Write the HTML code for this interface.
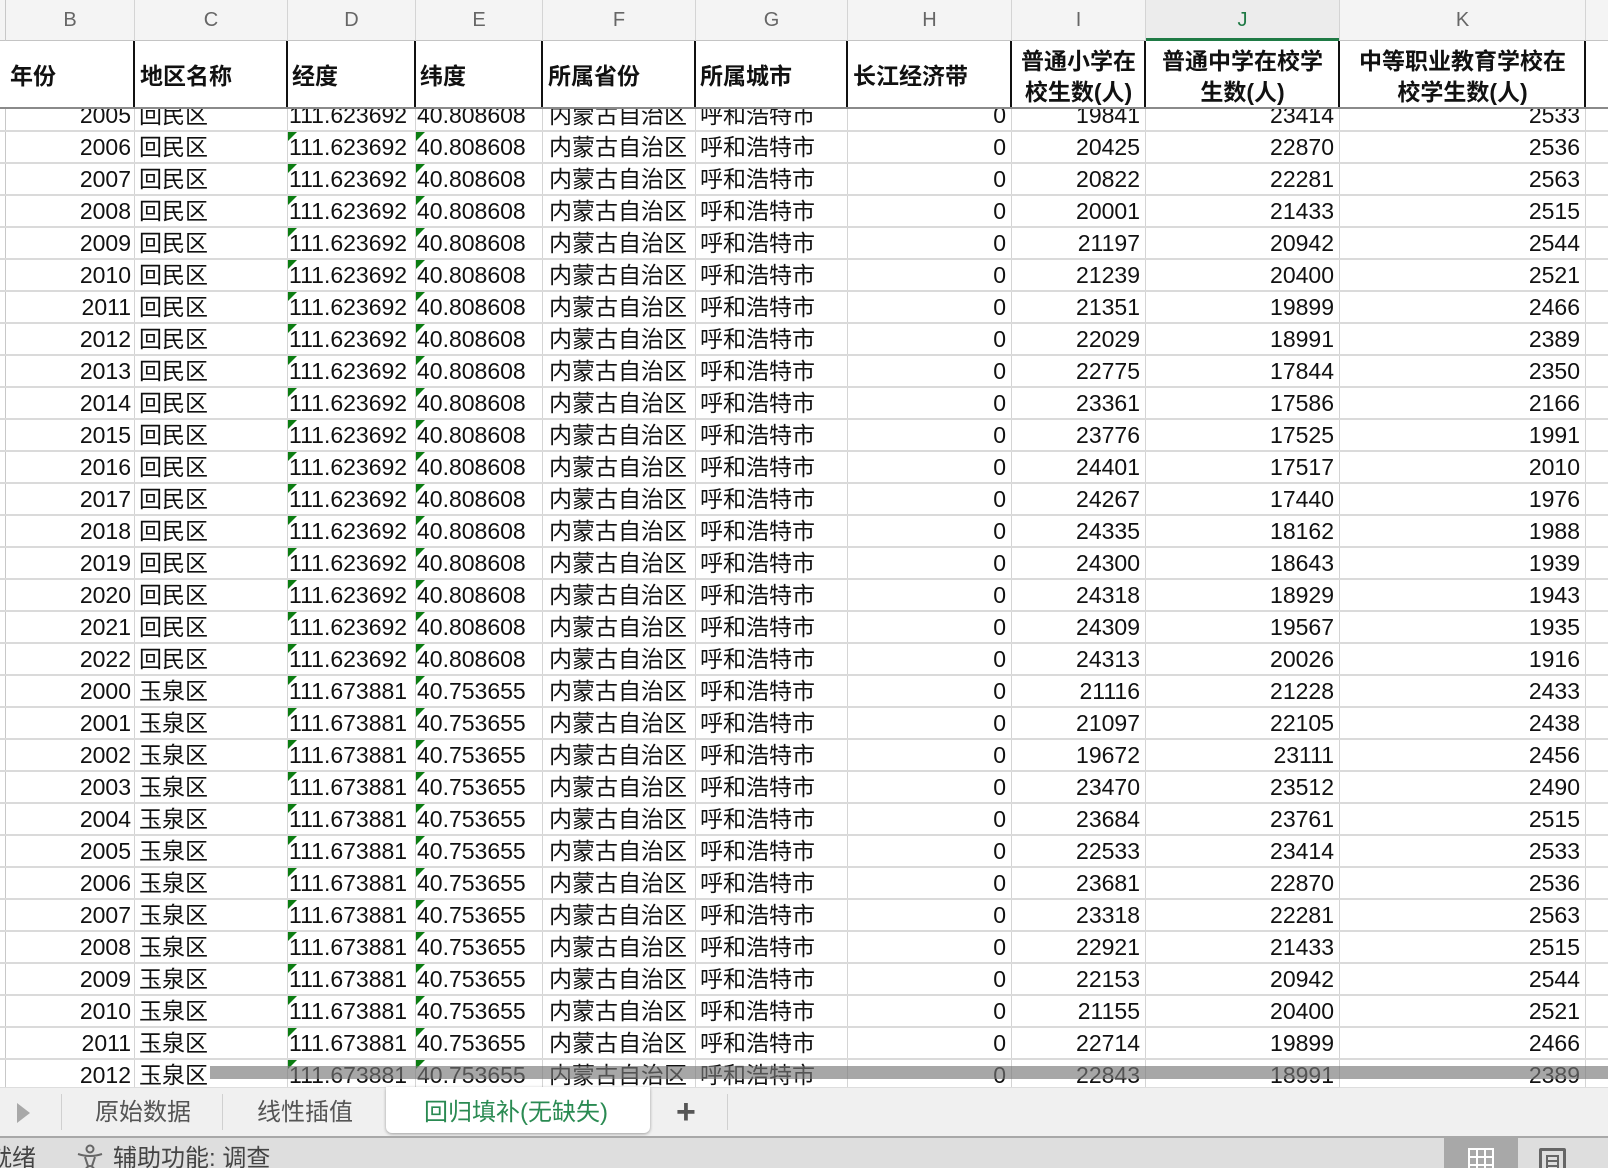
<!DOCTYPE html>
<html><head><meta charset="utf-8">
<style>
*{margin:0;padding:0;box-sizing:border-box}
body{width:1608px;height:1168px;overflow:hidden;background:#fff;position:relative;font-family:"Liberation Sans","Noto Sans CJK SC",sans-serif;color:#111}
.abs{position:absolute}
.colhdr{top:0;height:41px;background:#f4f4f4;border-bottom:1px solid #c4c4c4;color:#666;font-size:20px;line-height:40px;text-align:center}
.vl{position:absolute;width:1px;background:#d4d4d4;top:0;height:1088px}
.hl{position:absolute;left:0;width:1608px;height:2px;background:#dadada}
.row{position:absolute;left:0;width:1608px;height:32px;font-size:23px;line-height:32px;white-space:nowrap}
.row span{position:absolute;top:0}
.b{right:1477px}
.c{left:139px}
.d{left:289px}
.e{left:417px}
.f{left:549px}
.g{left:700px}
.h{right:602px}
.i{right:468px}
.j{right:274px}
.k{right:28px}
.tri{position:absolute;width:0;height:0;border-top:9px solid #0b7d12;border-right:9px solid transparent}
.hdr{position:absolute;top:41px;height:68px;left:0;width:1608px;background:#fff;border-bottom:2px solid #8a8a8a;font-weight:bold;font-size:23px;z-index:5}
.hdr span{position:absolute;top:2px;line-height:66px}
.hdr .two{line-height:31px;text-align:center;top:5px}
.bv{position:absolute;top:0;height:66px;width:2px;background:#111}
.wrap{position:absolute;left:0;top:3px;width:1608px;height:1085px;overflow:hidden}
</style></head><body>

<!-- column letters -->
<div class="abs colhdr" style="left:0;width:1608px"></div>
<div class="abs colhdr" style="left:5px;width:129px;border-left:1px solid #c4c4c4">B</div>
<div class="abs colhdr" style="left:134px;width:153px;border-left:1px solid #d8d8d8">C</div>
<div class="abs colhdr" style="left:287px;width:128px;border-left:1px solid #d8d8d8">D</div>
<div class="abs colhdr" style="left:415px;width:127px;border-left:1px solid #d8d8d8">E</div>
<div class="abs colhdr" style="left:542px;width:153px;border-left:1px solid #d8d8d8">F</div>
<div class="abs colhdr" style="left:695px;width:152px;border-left:1px solid #d8d8d8">G</div>
<div class="abs colhdr" style="left:847px;width:164px;border-left:1px solid #d8d8d8">H</div>
<div class="abs colhdr" style="left:1011px;width:134px;border-left:1px solid #d8d8d8">I</div>
<div class="abs colhdr" style="left:1145px;width:194px;border-left:1px solid #d8d8d8;background:#ececec;color:#1f7a45;border-bottom:3px solid #1f7a45">J</div>
<div class="abs colhdr" style="left:1339px;width:246px;border-left:1px solid #d8d8d8">K</div>
<div class="abs colhdr" style="left:1585px;width:23px;border-left:1px solid #d8d8d8"></div>

<!-- grid lines -->
<div class="vl" style="left:5px;background:#c8c8c8"></div>
<div class="vl" style="left:134px"></div>
<div class="vl" style="left:287px"></div>
<div class="vl" style="left:415px"></div>
<div class="vl" style="left:542px"></div>
<div class="vl" style="left:695px"></div>
<div class="vl" style="left:847px"></div>
<div class="vl" style="left:1011px"></div>
<div class="vl" style="left:1145px"></div>
<div class="vl" style="left:1339px"></div>
<div class="vl" style="left:1585px"></div>

<div class="wrap">
<div class="hl" style="top:127px"></div><div class="hl" style="top:159px"></div><div class="hl" style="top:191px"></div><div class="hl" style="top:223px"></div><div class="hl" style="top:255px"></div><div class="hl" style="top:287px"></div><div class="hl" style="top:319px"></div><div class="hl" style="top:351px"></div><div class="hl" style="top:383px"></div><div class="hl" style="top:415px"></div><div class="hl" style="top:447px"></div><div class="hl" style="top:479px"></div><div class="hl" style="top:511px"></div><div class="hl" style="top:543px"></div><div class="hl" style="top:575px"></div><div class="hl" style="top:607px"></div><div class="hl" style="top:639px"></div><div class="hl" style="top:671px"></div><div class="hl" style="top:703px"></div><div class="hl" style="top:735px"></div><div class="hl" style="top:767px"></div><div class="hl" style="top:799px"></div><div class="hl" style="top:831px"></div><div class="hl" style="top:863px"></div><div class="hl" style="top:895px"></div><div class="hl" style="top:927px"></div><div class="hl" style="top:959px"></div><div class="hl" style="top:991px"></div><div class="hl" style="top:1023px"></div><div class="hl" style="top:1055px"></div>

<div class="tri" style="left:288px;top:129px"></div><div class="tri" style="left:416px;top:129px"></div>
<div class="tri" style="left:288px;top:161px"></div><div class="tri" style="left:416px;top:161px"></div>
<div class="tri" style="left:288px;top:193px"></div><div class="tri" style="left:416px;top:193px"></div>
<div class="tri" style="left:288px;top:225px"></div><div class="tri" style="left:416px;top:225px"></div>
<div class="tri" style="left:288px;top:257px"></div><div class="tri" style="left:416px;top:257px"></div>
<div class="tri" style="left:288px;top:289px"></div><div class="tri" style="left:416px;top:289px"></div>
<div class="tri" style="left:288px;top:321px"></div><div class="tri" style="left:416px;top:321px"></div>
<div class="tri" style="left:288px;top:353px"></div><div class="tri" style="left:416px;top:353px"></div>
<div class="tri" style="left:288px;top:385px"></div><div class="tri" style="left:416px;top:385px"></div>
<div class="tri" style="left:288px;top:417px"></div><div class="tri" style="left:416px;top:417px"></div>
<div class="tri" style="left:288px;top:449px"></div><div class="tri" style="left:416px;top:449px"></div>
<div class="tri" style="left:288px;top:481px"></div><div class="tri" style="left:416px;top:481px"></div>
<div class="tri" style="left:288px;top:513px"></div><div class="tri" style="left:416px;top:513px"></div>
<div class="tri" style="left:288px;top:545px"></div><div class="tri" style="left:416px;top:545px"></div>
<div class="tri" style="left:288px;top:577px"></div><div class="tri" style="left:416px;top:577px"></div>
<div class="tri" style="left:288px;top:609px"></div><div class="tri" style="left:416px;top:609px"></div>
<div class="tri" style="left:288px;top:641px"></div><div class="tri" style="left:416px;top:641px"></div>
<div class="tri" style="left:288px;top:673px"></div><div class="tri" style="left:416px;top:673px"></div>
<div class="tri" style="left:288px;top:705px"></div><div class="tri" style="left:416px;top:705px"></div>
<div class="tri" style="left:288px;top:737px"></div><div class="tri" style="left:416px;top:737px"></div>
<div class="tri" style="left:288px;top:769px"></div><div class="tri" style="left:416px;top:769px"></div>
<div class="tri" style="left:288px;top:801px"></div><div class="tri" style="left:416px;top:801px"></div>
<div class="tri" style="left:288px;top:833px"></div><div class="tri" style="left:416px;top:833px"></div>
<div class="tri" style="left:288px;top:865px"></div><div class="tri" style="left:416px;top:865px"></div>
<div class="tri" style="left:288px;top:897px"></div><div class="tri" style="left:416px;top:897px"></div>
<div class="tri" style="left:288px;top:929px"></div><div class="tri" style="left:416px;top:929px"></div>
<div class="tri" style="left:288px;top:961px"></div><div class="tri" style="left:416px;top:961px"></div>
<div class="tri" style="left:288px;top:993px"></div><div class="tri" style="left:416px;top:993px"></div>
<div class="tri" style="left:288px;top:1025px"></div><div class="tri" style="left:416px;top:1025px"></div>
<div class="tri" style="left:288px;top:1057px"></div><div class="tri" style="left:416px;top:1057px"></div>

<div class="row" style="top:96px"><span class="b">2005</span><span class="c">回民区</span><span class="d">111.623692</span><span class="e">40.808608</span><span class="f">内蒙古自治区</span><span class="g">呼和浩特市</span><span class="h">0</span><span class="i">19841</span><span class="j">23414</span><span class="k">2533</span></div>
<div class="row" style="top:128px"><span class="b">2006</span><span class="c">回民区</span><span class="d">111.623692</span><span class="e">40.808608</span><span class="f">内蒙古自治区</span><span class="g">呼和浩特市</span><span class="h">0</span><span class="i">20425</span><span class="j">22870</span><span class="k">2536</span></div>
<div class="row" style="top:160px"><span class="b">2007</span><span class="c">回民区</span><span class="d">111.623692</span><span class="e">40.808608</span><span class="f">内蒙古自治区</span><span class="g">呼和浩特市</span><span class="h">0</span><span class="i">20822</span><span class="j">22281</span><span class="k">2563</span></div>
<div class="row" style="top:192px"><span class="b">2008</span><span class="c">回民区</span><span class="d">111.623692</span><span class="e">40.808608</span><span class="f">内蒙古自治区</span><span class="g">呼和浩特市</span><span class="h">0</span><span class="i">20001</span><span class="j">21433</span><span class="k">2515</span></div>
<div class="row" style="top:224px"><span class="b">2009</span><span class="c">回民区</span><span class="d">111.623692</span><span class="e">40.808608</span><span class="f">内蒙古自治区</span><span class="g">呼和浩特市</span><span class="h">0</span><span class="i">21197</span><span class="j">20942</span><span class="k">2544</span></div>
<div class="row" style="top:256px"><span class="b">2010</span><span class="c">回民区</span><span class="d">111.623692</span><span class="e">40.808608</span><span class="f">内蒙古自治区</span><span class="g">呼和浩特市</span><span class="h">0</span><span class="i">21239</span><span class="j">20400</span><span class="k">2521</span></div>
<div class="row" style="top:288px"><span class="b">2011</span><span class="c">回民区</span><span class="d">111.623692</span><span class="e">40.808608</span><span class="f">内蒙古自治区</span><span class="g">呼和浩特市</span><span class="h">0</span><span class="i">21351</span><span class="j">19899</span><span class="k">2466</span></div>
<div class="row" style="top:320px"><span class="b">2012</span><span class="c">回民区</span><span class="d">111.623692</span><span class="e">40.808608</span><span class="f">内蒙古自治区</span><span class="g">呼和浩特市</span><span class="h">0</span><span class="i">22029</span><span class="j">18991</span><span class="k">2389</span></div>
<div class="row" style="top:352px"><span class="b">2013</span><span class="c">回民区</span><span class="d">111.623692</span><span class="e">40.808608</span><span class="f">内蒙古自治区</span><span class="g">呼和浩特市</span><span class="h">0</span><span class="i">22775</span><span class="j">17844</span><span class="k">2350</span></div>
<div class="row" style="top:384px"><span class="b">2014</span><span class="c">回民区</span><span class="d">111.623692</span><span class="e">40.808608</span><span class="f">内蒙古自治区</span><span class="g">呼和浩特市</span><span class="h">0</span><span class="i">23361</span><span class="j">17586</span><span class="k">2166</span></div>
<div class="row" style="top:416px"><span class="b">2015</span><span class="c">回民区</span><span class="d">111.623692</span><span class="e">40.808608</span><span class="f">内蒙古自治区</span><span class="g">呼和浩特市</span><span class="h">0</span><span class="i">23776</span><span class="j">17525</span><span class="k">1991</span></div>
<div class="row" style="top:448px"><span class="b">2016</span><span class="c">回民区</span><span class="d">111.623692</span><span class="e">40.808608</span><span class="f">内蒙古自治区</span><span class="g">呼和浩特市</span><span class="h">0</span><span class="i">24401</span><span class="j">17517</span><span class="k">2010</span></div>
<div class="row" style="top:480px"><span class="b">2017</span><span class="c">回民区</span><span class="d">111.623692</span><span class="e">40.808608</span><span class="f">内蒙古自治区</span><span class="g">呼和浩特市</span><span class="h">0</span><span class="i">24267</span><span class="j">17440</span><span class="k">1976</span></div>
<div class="row" style="top:512px"><span class="b">2018</span><span class="c">回民区</span><span class="d">111.623692</span><span class="e">40.808608</span><span class="f">内蒙古自治区</span><span class="g">呼和浩特市</span><span class="h">0</span><span class="i">24335</span><span class="j">18162</span><span class="k">1988</span></div>
<div class="row" style="top:544px"><span class="b">2019</span><span class="c">回民区</span><span class="d">111.623692</span><span class="e">40.808608</span><span class="f">内蒙古自治区</span><span class="g">呼和浩特市</span><span class="h">0</span><span class="i">24300</span><span class="j">18643</span><span class="k">1939</span></div>
<div class="row" style="top:576px"><span class="b">2020</span><span class="c">回民区</span><span class="d">111.623692</span><span class="e">40.808608</span><span class="f">内蒙古自治区</span><span class="g">呼和浩特市</span><span class="h">0</span><span class="i">24318</span><span class="j">18929</span><span class="k">1943</span></div>
<div class="row" style="top:608px"><span class="b">2021</span><span class="c">回民区</span><span class="d">111.623692</span><span class="e">40.808608</span><span class="f">内蒙古自治区</span><span class="g">呼和浩特市</span><span class="h">0</span><span class="i">24309</span><span class="j">19567</span><span class="k">1935</span></div>
<div class="row" style="top:640px"><span class="b">2022</span><span class="c">回民区</span><span class="d">111.623692</span><span class="e">40.808608</span><span class="f">内蒙古自治区</span><span class="g">呼和浩特市</span><span class="h">0</span><span class="i">24313</span><span class="j">20026</span><span class="k">1916</span></div>
<div class="row" style="top:672px"><span class="b">2000</span><span class="c">玉泉区</span><span class="d">111.673881</span><span class="e">40.753655</span><span class="f">内蒙古自治区</span><span class="g">呼和浩特市</span><span class="h">0</span><span class="i">21116</span><span class="j">21228</span><span class="k">2433</span></div>
<div class="row" style="top:704px"><span class="b">2001</span><span class="c">玉泉区</span><span class="d">111.673881</span><span class="e">40.753655</span><span class="f">内蒙古自治区</span><span class="g">呼和浩特市</span><span class="h">0</span><span class="i">21097</span><span class="j">22105</span><span class="k">2438</span></div>
<div class="row" style="top:736px"><span class="b">2002</span><span class="c">玉泉区</span><span class="d">111.673881</span><span class="e">40.753655</span><span class="f">内蒙古自治区</span><span class="g">呼和浩特市</span><span class="h">0</span><span class="i">19672</span><span class="j">23111</span><span class="k">2456</span></div>
<div class="row" style="top:768px"><span class="b">2003</span><span class="c">玉泉区</span><span class="d">111.673881</span><span class="e">40.753655</span><span class="f">内蒙古自治区</span><span class="g">呼和浩特市</span><span class="h">0</span><span class="i">23470</span><span class="j">23512</span><span class="k">2490</span></div>
<div class="row" style="top:800px"><span class="b">2004</span><span class="c">玉泉区</span><span class="d">111.673881</span><span class="e">40.753655</span><span class="f">内蒙古自治区</span><span class="g">呼和浩特市</span><span class="h">0</span><span class="i">23684</span><span class="j">23761</span><span class="k">2515</span></div>
<div class="row" style="top:832px"><span class="b">2005</span><span class="c">玉泉区</span><span class="d">111.673881</span><span class="e">40.753655</span><span class="f">内蒙古自治区</span><span class="g">呼和浩特市</span><span class="h">0</span><span class="i">22533</span><span class="j">23414</span><span class="k">2533</span></div>
<div class="row" style="top:864px"><span class="b">2006</span><span class="c">玉泉区</span><span class="d">111.673881</span><span class="e">40.753655</span><span class="f">内蒙古自治区</span><span class="g">呼和浩特市</span><span class="h">0</span><span class="i">23681</span><span class="j">22870</span><span class="k">2536</span></div>
<div class="row" style="top:896px"><span class="b">2007</span><span class="c">玉泉区</span><span class="d">111.673881</span><span class="e">40.753655</span><span class="f">内蒙古自治区</span><span class="g">呼和浩特市</span><span class="h">0</span><span class="i">23318</span><span class="j">22281</span><span class="k">2563</span></div>
<div class="row" style="top:928px"><span class="b">2008</span><span class="c">玉泉区</span><span class="d">111.673881</span><span class="e">40.753655</span><span class="f">内蒙古自治区</span><span class="g">呼和浩特市</span><span class="h">0</span><span class="i">22921</span><span class="j">21433</span><span class="k">2515</span></div>
<div class="row" style="top:960px"><span class="b">2009</span><span class="c">玉泉区</span><span class="d">111.673881</span><span class="e">40.753655</span><span class="f">内蒙古自治区</span><span class="g">呼和浩特市</span><span class="h">0</span><span class="i">22153</span><span class="j">20942</span><span class="k">2544</span></div>
<div class="row" style="top:992px"><span class="b">2010</span><span class="c">玉泉区</span><span class="d">111.673881</span><span class="e">40.753655</span><span class="f">内蒙古自治区</span><span class="g">呼和浩特市</span><span class="h">0</span><span class="i">21155</span><span class="j">20400</span><span class="k">2521</span></div>
<div class="row" style="top:1024px"><span class="b">2011</span><span class="c">玉泉区</span><span class="d">111.673881</span><span class="e">40.753655</span><span class="f">内蒙古自治区</span><span class="g">呼和浩特市</span><span class="h">0</span><span class="i">22714</span><span class="j">19899</span><span class="k">2466</span></div>
<div class="row" style="top:1056px"><span class="b">2012</span><span class="c">玉泉区</span><span class="d">111.673881</span><span class="e">40.753655</span><span class="f">内蒙古自治区</span><span class="g">呼和浩特市</span><span class="h">0</span><span class="i">22843</span><span class="j">18991</span><span class="k">2389</span></div>
</div>

<!-- scrollbar overlay -->
<div class="abs" style="left:210px;top:1066px;width:1398px;height:13px;background:rgba(120,120,120,0.65);z-index:4"></div>

<!-- frozen header -->
<div class="hdr">
<div class="bv" style="left:133px"></div><div class="bv" style="left:286px"></div><div class="bv" style="left:414px"></div><div class="bv" style="left:541px"></div><div class="bv" style="left:694px"></div><div class="bv" style="left:846px"></div><div class="bv" style="left:1010px"></div><div class="bv" style="left:1144px"></div><div class="bv" style="left:1338px"></div><div class="bv" style="left:1584px"></div>
<span style="left:10px">年份</span>
<span style="left:140px">地区名称</span>
<span style="left:292px">经度</span>
<span style="left:420px">纬度</span>
<span style="left:548px">所属省份</span>
<span style="left:700px">所属城市</span>
<span style="left:853px">长江经济带</span>
<span class="two" style="left:1012px;width:133px">普通小学在<br>校生数(人)</span>
<span class="two" style="left:1146px;width:193px">普通中学在校学<br>生数(人)</span>
<span class="two" style="left:1340px;width:245px">中等职业教育学校在<br>校学生数(人)</span>
</div>

<!-- tab bar -->
<div class="abs" style="left:0;top:1087px;width:1608px;height:51px;background:#f0f0f0;z-index:6;border-top:1px solid #ddd">
  <div class="abs" style="left:17px;top:15px;width:0;height:0;border-left:13px solid #a8a8a8;border-top:10px solid transparent;border-bottom:10px solid transparent"></div>
  <div class="abs" style="left:61px;top:6px;width:1px;height:36px;background:#d0d0d0"></div>
  <div class="abs" style="left:95px;top:0;line-height:50px;font-size:24px;color:#555">原始数据</div>
  <div class="abs" style="left:222px;top:6px;width:1px;height:36px;background:#d0d0d0"></div>
  <div class="abs" style="left:257px;top:0;line-height:50px;font-size:24px;color:#555">线性插值</div>
  <div class="abs" style="left:386px;top:-1px;width:264px;height:46px;background:#fff;border-radius:0 0 6px 6px;box-shadow:0 1px 3px rgba(0,0,0,0.35)"></div>
  <div class="abs" style="left:424px;top:0;line-height:50px;font-size:24px;color:#2a8a52">回归填补(无缺失)</div>
  <div class="abs" style="left:676px;top:0;line-height:48px;font-size:34px;color:#555;font-weight:bold">+</div>
  <div class="abs" style="left:727px;top:6px;width:1px;height:36px;background:#d0d0d0"></div>
</div>

<!-- status bar -->
<div class="abs" style="left:0;top:1136px;width:1608px;height:32px;background:#dedede;border-top:2px solid #a8a8a8;z-index:6;overflow:hidden">
  <div class="abs" style="left:-12px;top:4px;font-size:24px;color:#444;line-height:34px">就绪</div>
  <svg class="abs" style="left:76px;top:6px" width="28" height="28" viewBox="0 0 28 28"><g fill="none" stroke="#666" stroke-width="2"><circle cx="14" cy="5" r="3.5"/><path d="M2 10 Q14 14 26 10 M9 13 L12 22 M19 13 L16 22 M9 26 Q14 18 19 26"/></g></svg>
  <div class="abs" style="left:113px;top:4px;font-size:24px;color:#444;line-height:34px">辅助功能: 调查</div>
  <div class="abs" style="left:1444px;top:0;width:74px;height:32px;background:#a8a8a8"></div>
  <div class="abs" style="left:1468px;top:10px;width:26px;height:26px;background:#fff;padding:2px;display:grid;grid-template-columns:repeat(3,1fr);gap:2px">
    <i style="background:#a8a8a8"></i><i style="background:#a8a8a8"></i><i style="background:#a8a8a8"></i><i style="background:#a8a8a8"></i><i style="background:#a8a8a8"></i><i style="background:#a8a8a8"></i><i style="background:#a8a8a8"></i><i style="background:#a8a8a8"></i><i style="background:#a8a8a8"></i>
  </div>
  <div class="abs" style="left:1539px;top:10px;width:27px;height:30px;border:3px solid #666;border-radius:2px"></div>
  <div class="abs" style="left:1546px;top:17px;width:13px;height:16px;border:2px solid #666;border-top:none;border-bottom:none;background:repeating-linear-gradient(#666 0 2px,transparent 2px 5px)"></div>
</div>
</body></html>
